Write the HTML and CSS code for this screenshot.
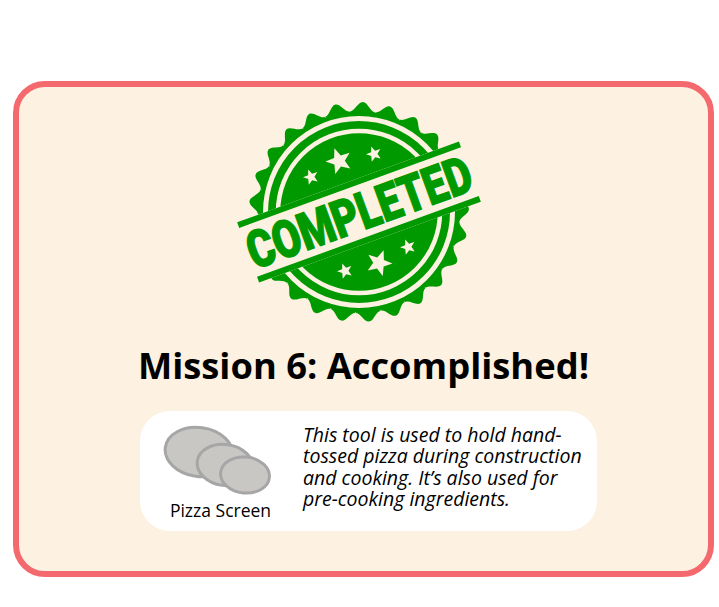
FILE: index.html
```html
<!DOCTYPE html>
<html lang="en">
<head>
<meta charset="utf-8">
<title>Mission 6: Accomplished!</title>
<link rel="stylesheet" href="styles.css">
</head>
<body>
<main class="card">
  <svg class="stamp" viewBox="-125 -112 250 224" width="250" height="224" aria-label="Completed stamp">
    <defs>
      <path id="tooth" d="M-12.66 -100.2 C-7.5 -100.6 -5 -110 0 -110 C5 -110 7.5 -100.6 12.66 -100.2 L0 -90 Z"/>
      <polygon id="star" points="0,-10 2.6,-3.4 9.5,-3.1 4.1,1.3 5.9,8.1 0,4.3 -5.9,8.1 -4.1,1.3 -9.5,-3.1 -2.6,-3.4"/>
    </defs>
    <g class="green">
      <circle r="100.5"/>
      <use href="#tooth" transform="rotate(2)"/><use href="#tooth" transform="rotate(16.4)"/><use href="#tooth" transform="rotate(30.8)"/><use href="#tooth" transform="rotate(45.2)"/><use href="#tooth" transform="rotate(59.6)"/><use href="#tooth" transform="rotate(74)"/><use href="#tooth" transform="rotate(88.4)"/><use href="#tooth" transform="rotate(102.8)"/><use href="#tooth" transform="rotate(117.2)"/><use href="#tooth" transform="rotate(131.6)"/><use href="#tooth" transform="rotate(146)"/><use href="#tooth" transform="rotate(160.4)"/><use href="#tooth" transform="rotate(174.8)"/><use href="#tooth" transform="rotate(189.2)"/><use href="#tooth" transform="rotate(203.6)"/><use href="#tooth" transform="rotate(218)"/><use href="#tooth" transform="rotate(232.4)"/><use href="#tooth" transform="rotate(246.8)"/><use href="#tooth" transform="rotate(261.2)"/><use href="#tooth" transform="rotate(275.6)"/><use href="#tooth" transform="rotate(290)"/><use href="#tooth" transform="rotate(304.4)"/><use href="#tooth" transform="rotate(318.8)"/><use href="#tooth" transform="rotate(333.2)"/><use href="#tooth" transform="rotate(347.6)"/>
    </g>
    <circle class="ring" r="93.5" stroke-width="5"/>
    <circle class="ring" r="81" stroke-width="4.5"/>
    <g class="cream">
      <use href="#star" transform="translate(-20 -51) rotate(-20) scale(1.35)"/>
      <use href="#star" transform="translate(15 -58) rotate(-20) scale(.8)"/>
      <use href="#star" transform="translate(-48 -35) rotate(-20) scale(.8)"/>
      <use href="#star" transform="translate(20 51) rotate(20) scale(1.35)"/>
      <use href="#star" transform="translate(49 35) rotate(-20) scale(.8)"/>
      <use href="#star" transform="translate(-14 59) rotate(-20) scale(.8)"/>
    </g>
    <g transform="rotate(-20)">
      <rect class="band" x="-118" y="-32" width="236" height="64"/>
      <rect class="green" x="-118" y="-32" width="236" height="6"/>
      <rect class="green" x="-118" y="26" width="236" height="6"/>
      <g transform="scale(.78 1)">
        <text class="stamp-text" x="0" y="18.5" text-anchor="middle">COMPLETED</text>
      </g>
    </g>
  </svg>
  <h1 class="title">Mission 6: Accomplished!</h1>
  <section class="info">
    <figure class="tool">
      <svg class="tool-art" viewBox="0 0 110 70" width="110" height="70" aria-hidden="true">
        <ellipse class="plate" cx="37" cy="27" rx="34" ry="24.5" transform="rotate(8 37 27)"/>
        <ellipse class="plate" cx="63" cy="40" rx="28" ry="20.5" transform="rotate(8 63 40)"/>
        <ellipse class="plate" cx="83" cy="50" rx="24.5" ry="18" transform="rotate(6 83 50)"/>
      </svg>
      <figcaption class="tool-name">Pizza Screen</figcaption>
    </figure>
    <p class="tool-text">This tool is used to hold hand-tossed pizza during construction and cooking. It’s also used for pre-cooking ingredients.</p>
  </section>
</main>
</body>
</html>
```
FILE: styles.css
```css
html, body {
  margin: 0;
  background: #fff;
}
body {
  padding: 81px 5px 30px 13px;
  font-family: "Open Sans", sans-serif;
  color: #000;
  overflow: hidden;
}
.card {
  box-sizing: border-box;
  width: 701px;
  height: 496px;
  border: 6px solid #f4696e;
  border-radius: 32px;
  background: #fdf1e2;
  display: flex;
  flex-direction: column;
  align-items: center;
  padding-top: 13px;
}
.stamp {
  display: block;
  flex: none;
  margin-left: -9px;
}
.green { fill: #009a00; }
.cream { fill: #fdf1e2; }
.band { fill: #fdf1e2; }
.ring {
  fill: none;
  stroke: #fdf1e2;
}
.stamp-text {
  font-family: "Roboto", sans-serif;
  font-weight: 900;
  font-size: 52px;
  fill: #009a00;
  stroke: #009a00;
  stroke-width: 1.4px;
}
.title {
  margin: 17px 0 0;
  font-size: 36.3px;
  line-height: 49px;
  font-weight: 700;
  white-space: nowrap;
}
.info {
  box-sizing: border-box;
  width: 457px;
  height: 120px;
  margin: 21px 0 0 10px;
  background: #fff;
  border-radius: 30px;
  display: flex;
  padding: 13px 14px 0 22px;
  column-gap: 31px;
}
.tool {
  margin: 1px 0 0;
  width: 110px;
  flex: none;
  display: flex;
  flex-direction: column;
  align-items: center;
}
.tool-art { display: block; flex: none; }
.tool-name {
  margin: 3px 0 0 7px;
  font-size: 17.5px;
  line-height: 24px;
  white-space: nowrap;
}
.tool-text {
  margin: 0;
  width: 285px;
  font-size: 19.5px;
  line-height: 21.4px;
  font-style: italic;
}
.plate {
  fill: #c9c7c4;
  stroke: #a6a6a6;
  stroke-width: 3;
}
```
